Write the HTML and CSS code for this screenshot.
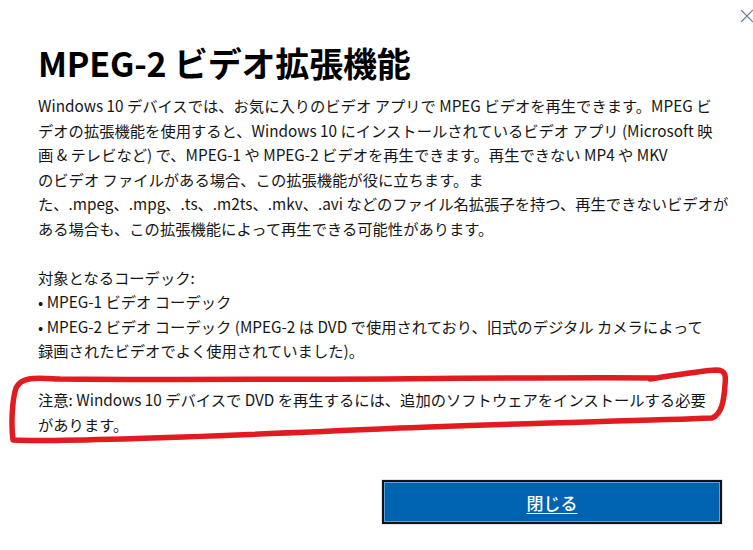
FILE: index.html
```html
<!DOCTYPE html>
<html lang="ja">
<head>
<meta charset="utf-8">
<link rel="stylesheet" href="styles.css">
</head>
<body>
<div class="dialog">
  <button class="close" aria-label="閉じる">
    <svg width="14" height="14" viewBox="0 0 14 14"><path d="M1 1 L13 13 M13 1 L1 13" stroke="#6a7f95" stroke-width="1.2" fill="none"/></svg>
  </button>
  <h1 class="title">MPEG-2 ビデオ拡張機能</h1>
  <div class="desc">
    <p class="para">Windows 10 デバイスでは、お気に入りのビデオ アプリで MPEG ビデオを再生できます。MPEG ビ<br>デオの拡張機能を使用すると、Windows 10 にインストールされているビデオ アプリ (Microsoft 映<br>画 &amp; テレビなど) で、MPEG-1 や MPEG-2 ビデオを再生できます。再生できない MP4 や MKV<br>のビデオ ファイルがある場合、この拡張機能が役に立ちます。ま<br>た、.mpeg、.mpg、.ts、.m2ts、.mkv、.avi などのファイル名拡張子を持つ、再生できないビデオが<br>ある場合も、この拡張機能によって再生できる可能性があります。</p>
    <p class="para">対象となるコーデック:<br>• MPEG-1 ビデオ コーデック<br>• MPEG-2 ビデオ コーデック (MPEG-2 は DVD で使用されており、旧式のデジタル カメラによって<br>録画されたビデオでよく使用されていました)。</p>
    <p class="para">注意: Windows 10 デバイスで DVD を再生するには、追加のソフトウェアをインストールする必要<br>があります。</p>
  </div>
  <div class="footer">
    <button class="primary"><span class="label">閉じる</span></button>
  </div>
  <svg class="annotation" width="753" height="550" viewBox="0 0 753 550">
    <path d="M655 378 C 500 377, 250 381, 60 379 C 35 378, 22 376, 16 388 C 12 400, 11 425, 13 440 C 60 442, 200 437, 400 428 C 520 423, 640 421, 712 418 C 722 414, 724 400, 725 385 C 726 376, 726 370, 716 370 C 700 371, 690 373, 650 379" stroke="#e11b1f" stroke-width="5.5" fill="none" stroke-linecap="round" stroke-linejoin="round"/>
  </svg>
</div>
</body>
</html>
```

FILE: styles.css
```css
html, body {
  margin: 0;
  padding: 0;
  background: #ffffff;
}

.dialog {
  position: relative;
  width: 753px;
  height: 550px;
  overflow: hidden;
  box-sizing: border-box;
  padding: 41px 0 0 38px;
  font-family: "Noto Sans CJK JP", "Noto Sans", sans-serif;
  color: #161616;
}

.close {
  position: absolute;
  top: 9px;
  left: 740px;
  padding: 0;
  margin: 0;
  border: none;
  background: transparent;
  width: 14px;
  height: 14px;
  display: block;
}

.close svg {
  display: block;
}

.title {
  margin: 0;
  font-size: 34px;
  line-height: 44px;
  font-weight: 700;
  color: #000;
  letter-spacing: -0.2px;
}

.desc {
  margin-top: 8px;
  font-size: 15.3px;
  line-height: 24.5px;
}

.para {
  margin: 0 0 24.5px 0;
  white-space: nowrap;
}

.para:last-child {
  margin-bottom: 0;
}

.footer {
  display: flex;
  justify-content: flex-end;
  padding-right: 31px;
  margin-top: 44px;
}

.primary {
  width: 340px;
  height: 44px;
  box-sizing: border-box;
  border: 2px solid #111;
  background: #0063b1;
  box-shadow: inset 0 0 0 1px #5a9ee0, 0 0 0 1px #e6e6e6;
  color: #fff;
  font-family: "Noto Sans CJK JP", sans-serif;
  font-size: 17px;
  font-weight: 500;
  padding: 0;
  display: flex;
  align-items: center;
  justify-content: center;
}

.label {
  text-decoration: underline;
  text-underline-offset: 3px;
}

.annotation {
  position: absolute;
  left: 0;
  top: 0;
  pointer-events: none;
}
```
